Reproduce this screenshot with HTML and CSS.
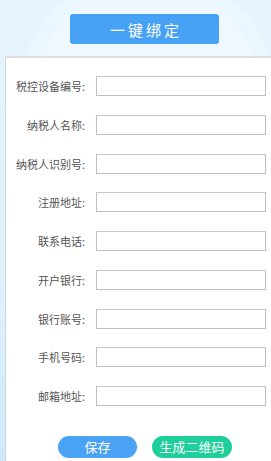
FILE: index.html
```html
<!DOCTYPE html>
<html lang="zh">
<head>
<meta charset="utf-8">
<link rel="stylesheet" href="styles.css">
</head>
<body>
<div class="bg-circle"></div>
<div class="page">
  <div class="head">
    <button class="bind-btn">一键绑定</button>
  </div>
  <div class="panel">
    <div class="row"><label>税控设备编号:</label><input type="text"></div>
    <div class="row"><label>纳税人名称:</label><input type="text"></div>
    <div class="row"><label>纳税人识别号:</label><input type="text"></div>
    <div class="row"><label>注册地址:</label><input type="text"></div>
    <div class="row"><label>联系电话:</label><input type="text"></div>
    <div class="row"><label>开户银行:</label><input type="text"></div>
    <div class="row"><label>银行账号:</label><input type="text"></div>
    <div class="row"><label>手机号码:</label><input type="text"></div>
    <div class="row"><label>邮箱地址:</label><input type="text"></div>
    <div class="actions">
      <button class="btn btn-save">保存</button>
      <button class="btn btn-qr">生成二维码</button>
    </div>
  </div>
</div>
</body>
</html>
```
FILE: styles.css
```css
html, body {
  margin: 0;
  padding: 0;
  width: 271px;
  height: 461px;
  overflow: hidden;
}
body {
  background: linear-gradient(180deg, #e6f4fd 0%, #e0f1fd 60%, #cfe9fb 100%);
  font-family: "Noto Sans CJK SC", "Noto Sans", sans-serif;
  position: relative;
}
.bg-circle {
  position: absolute;
  left: 33px;
  top: -18px;
  width: 230px;
  height: 230px;
  border-radius: 50%;
  background: #eff8fe;
  box-shadow: 0 0 0 14px rgba(240, 249, 255, 0.5);
}
.page {
  position: relative;
  display: flex;
  flex-direction: column;
}
.head {
  height: 56px;
  display: flex;
  padding-left: 70px;
  padding-top: 14px;
  box-sizing: border-box;
}
.bind-btn {
  width: 149px;
  height: 30px;
  border: none;
  border-radius: 3px;
  background: #47a1f5;
  color: #fff;
  font-family: inherit;
  font-size: 15px;
  letter-spacing: 3px;
  padding: 0 0 0 3px;
}
.panel {
  margin-left: 5px;
  background: #fff;
  border-top: 2px solid #dedede;
  border-left: 1px solid #cfd8de;
  height: 410px;
  box-sizing: border-box;
  padding-top: 18px;
  display: flex;
  flex-direction: column;
  gap: 18.75px;
}
.row {
  display: flex;
  align-items: center;
  height: 20px;
}
.row label {
  width: 79px;
  text-align: right;
  font-size: 11px;
  color: #555;
  margin-right: 11px;
  white-space: nowrap;
}
.row input {
  width: 170px;
  height: 20px;
  box-sizing: border-box;
  border: 1px solid #bfbfbf;
  border-top-color: #c8c8c8;
  margin: 0;
  padding: 0 4px;
  background: #fff;
}
.actions {
  display: flex;
  gap: 15px;
  padding-left: 52px;
  margin-top: 11px;
}
.btn {
  width: 80px;
  height: 22px;
  border: none;
  border-radius: 11px;
  color: #fff;
  font-family: inherit;
  font-size: 13px;
  padding: 0;
}
.btn-save {
  background: #4aa2f4;
  width: 79px;
}
.btn-qr {
  background: #1ecf9c;
}
```
